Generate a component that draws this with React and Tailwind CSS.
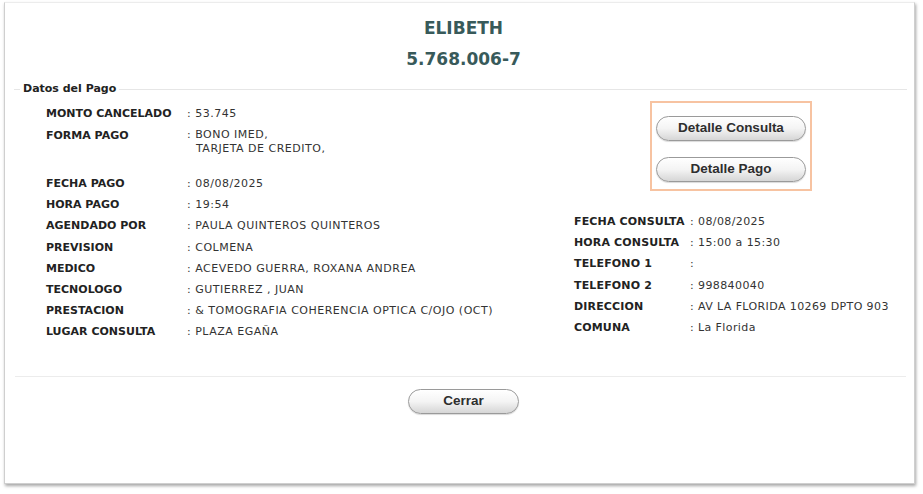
import React from "react";

const leftRows = [
  ["MONTO CANCELADO", ["53.745"]],
  ["FORMA PAGO", ["BONO IMED,", "TARJETA DE CREDITO,"]],
  ["FECHA PAGO", ["08/08/2025"]],
  ["HORA PAGO", ["19:54"]],
  ["AGENDADO POR", ["PAULA QUINTEROS QUINTEROS"]],
  ["PREVISION", ["COLMENA"]],
  ["MEDICO", ["ACEVEDO GUERRA, ROXANA ANDREA"]],
  ["TECNOLOGO", ["GUTIERREZ , JUAN"]],
  ["PRESTACION", ["& TOMOGRAFIA COHERENCIA OPTICA C/OJO (OCT)"]],
  ["LUGAR CONSULTA", ["PLAZA EGAÑA"]],
];

const rightRows = [
  ["FECHA CONSULTA", ": 08/08/2025"],
  ["HORA CONSULTA", ": 15:00 a 15:30"],
  ["TELEFONO 1", ":"],
  ["TELEFONO 2", ": 998840040"],
  ["DIRECCION", ": AV LA FLORIDA 10269 DPTO 903"],
  ["COMUNA", ": La Florida"],
];

function PillButton({ children, className }) {
  return (
    <button
      className={
        "rounded-full border border-[#9a9a9a] bg-gradient-to-b from-white via-[#f4f4f4] to-[#d6d6d6] text-[13.5px] font-bold text-[#2e2e2e] shadow-[inset_0_1px_0_#fff,0_1px_1px_rgba(0,0,0,0.15)] " +
        className
      }
      style={{ fontFamily: '"Liberation Sans", Arial, sans-serif' }}
    >
      {children}
    </button>
  );
}

export default function App() {
  return (
    <div
      className="w-[923px] h-[494px] bg-white pl-[4px] pt-[2px]"
      style={{ fontFamily: '"DejaVu Sans", Verdana, sans-serif' }}
    >
      <div className="w-[911px] h-[482px] border border-[#cfcfcf] border-t-[#ececec] bg-white shadow-[1px_2px_3px_rgba(0,0,0,0.35)] flex flex-col">
        {/* titles */}
        <div className="pl-[8px] mt-[13px] text-center text-[17px] font-bold leading-[24px] text-[#385a5a]">
          ELIBETH
        </div>
        <div className="pl-[8px] mt-[7px] text-center text-[17px] font-bold leading-[24px] text-[#385a5a]">
          5.768.006-7
        </div>

        {/* legend */}
        <div className="mt-[10px] flex items-center h-[16px] pl-[9px] pr-[7px]">
          <div className="w-[6px] h-px bg-[#e6e6e6]" />
          <div className="px-[3px] text-[11px] font-bold text-[#222] leading-[16px]">Datos del Pago</div>
          <div className="flex-1 h-px bg-[#e6e6e6]" />
        </div>

        {/* content */}
        <div className="flex h-[271px]">
          <div className="pl-[41px] pt-[6px] w-[569px] text-[11px]">
            {leftRows.map(([label, vals], i) => (
              <div
                key={label}
                className={"flex " + (vals.length > 1 ? "h-[48px]" : i === 0 ? "h-[22px]" : "h-[21.2px]")}
              >
                <div className="w-[141px] font-bold text-[#222] leading-[21px]">{label}</div>
                <div className="text-[#333] tracking-[0.5px]">
                  {vals.length > 1 ? (
                    <div className="pt-[3px] leading-[14px]">
                      <div>: {vals[0]}</div>
                      <div className="pl-[9px]">{vals[1]}</div>
                    </div>
                  ) : (
                    <div className="leading-[21px]">: {vals[0]}</div>
                  )}
                </div>
              </div>
            ))}
          </div>
          <div className="flex-1 pt-[4px] text-[11px]">
            <div className="ml-[76px] w-[162px] h-[90px] border-2 border-[#f7c3a1] flex flex-col items-center pt-[13px] gap-[16px]">
              <PillButton className="w-[150px] h-[25px]">Detalle Consulta</PillButton>
              <PillButton className="w-[150px] h-[25px]">Detalle Pago</PillButton>
            </div>
            <div className="mt-[20px]">
              {rightRows.map(([label, val]) => (
                <div key={label} className="flex h-[21.2px] leading-[21px]">
                  <div className="w-[116px] font-bold text-[#222] tracking-[0.15px]">{label}</div>
                  <div className="text-[#333] tracking-[0.4px]">{val}</div>
                </div>
              ))}
            </div>
          </div>
        </div>

        {/* bottom separator */}
        <div className="mt-[8px] ml-[10px] mr-[8px] h-px bg-[#ececec]" />
        <div className="pl-[8px] mt-[12px] flex justify-center">
          <PillButton className="w-[111px] h-[25px]">Cerrar</PillButton>
        </div>
      </div>
    </div>
  );
}
